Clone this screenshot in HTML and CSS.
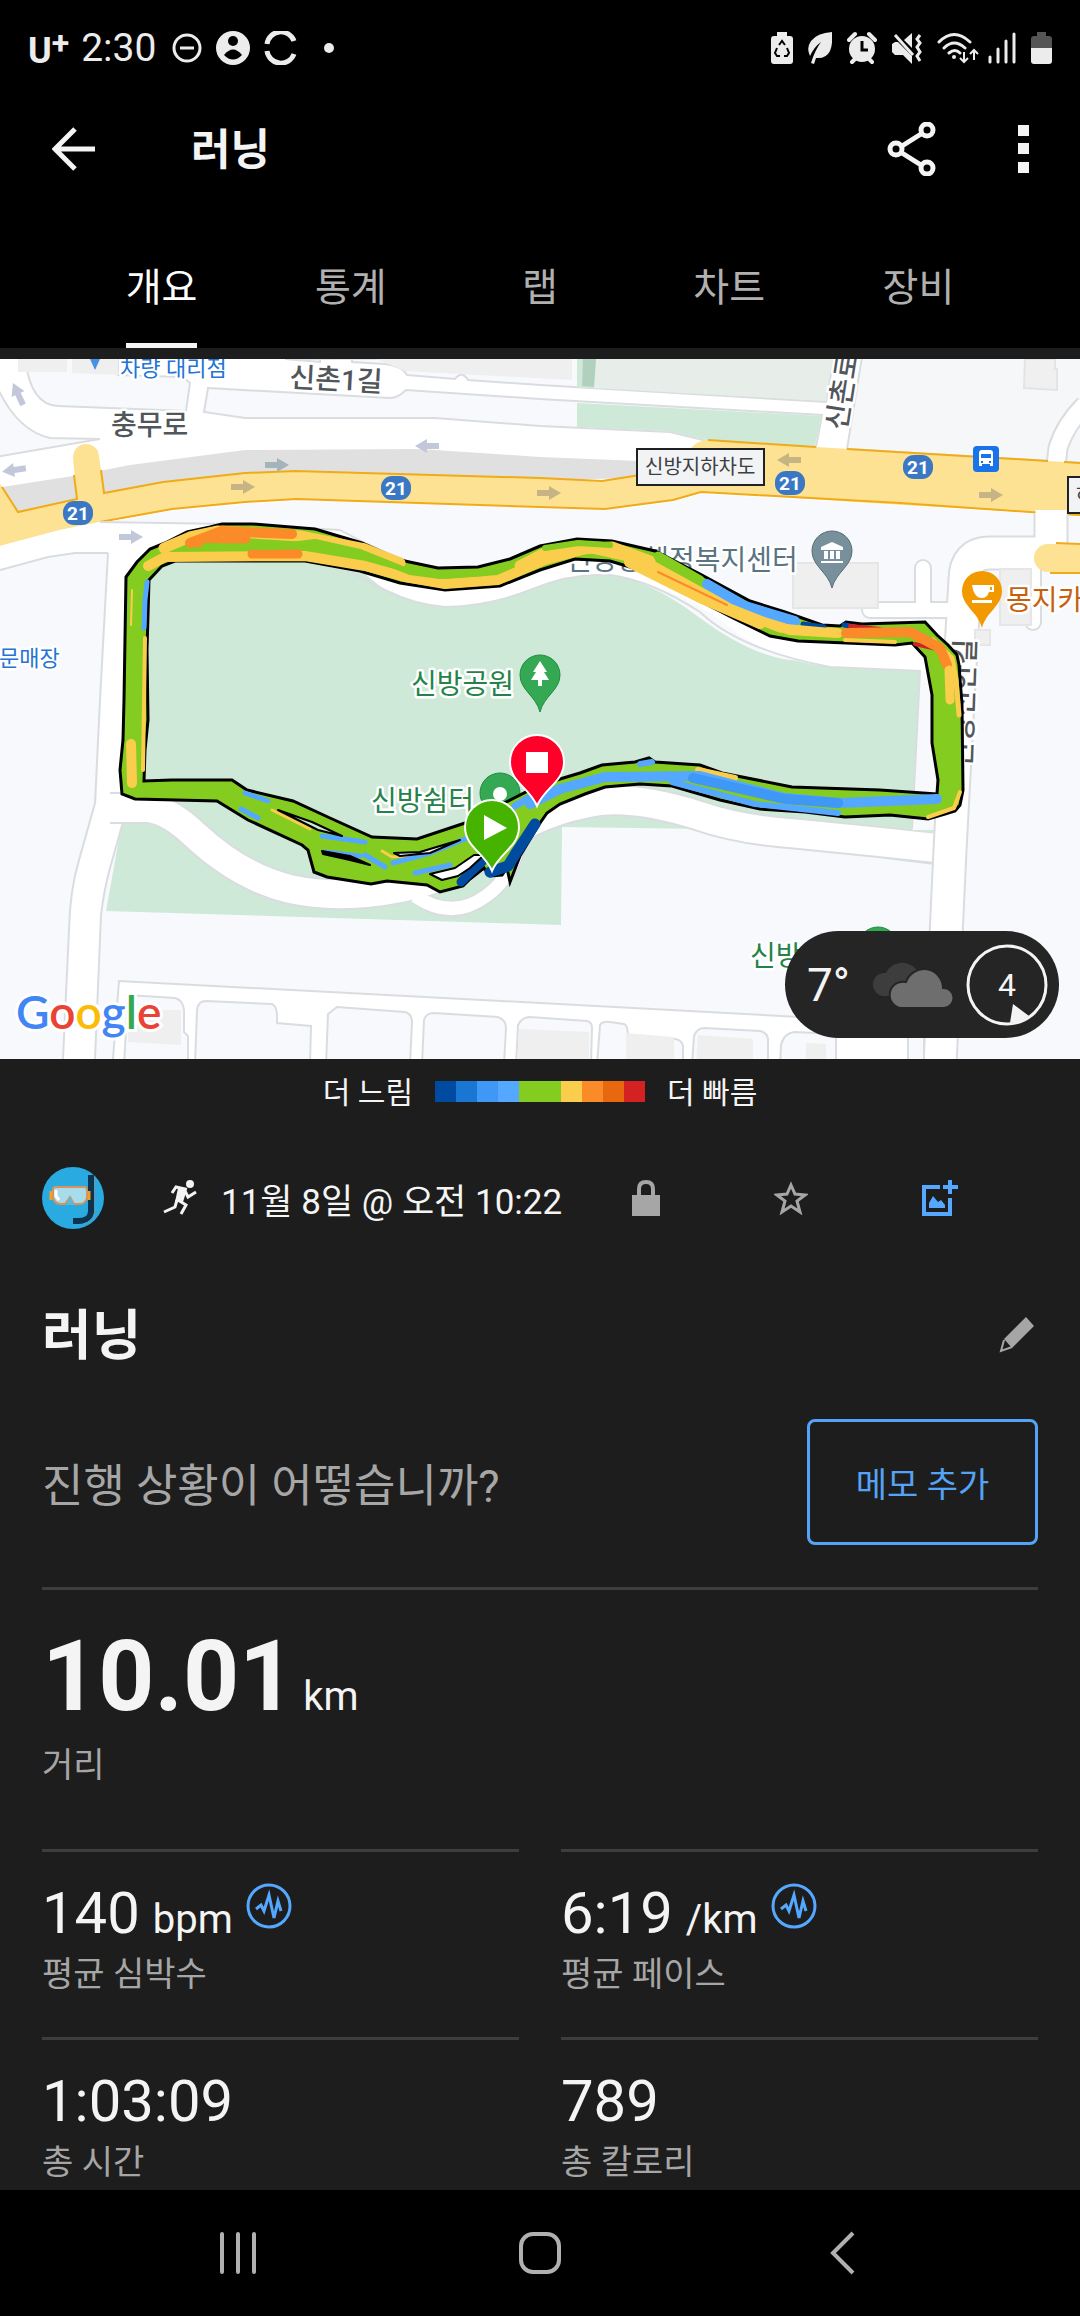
FILE: index.html
```html
<!DOCTYPE html>
<html lang="ko">
<head>
    <meta charset="UTF-8">
    <meta name="viewport" content="width=device-width, initial-scale=1.0">
    <title>러닝</title>
    <link rel="stylesheet" href="styles.css">
</head>
<body>

    <!-- Status bar -->
    <div class="status-bar">
        <div class="status-left">
            <span class="carrier">U<span class="carrier-plus">+</span></span>
            <span class="clock">2:30</span>
            <div class="notifications">
                <svg width="30" height="34" viewBox="0 0 30 34"><circle cx="15" cy="17" r="13" fill="none" stroke="#ececec" stroke-width="3"/><path d="M8 17h14" stroke="#ececec" stroke-width="3"/></svg>
                <svg width="34" height="34" viewBox="0 0 34 34"><circle cx="17" cy="17" r="17" fill="#ececec"/><circle cx="17" cy="10" r="5" fill="#000"/><path d="M8 24q9-11 18 0q-9 9-18 0z" fill="#000"/></svg>
                <svg width="34" height="34" viewBox="0 0 34 34"><path d="M3 13a14 14 0 0 1 27-3M3 20a14 14 0 0 0 27 3" fill="none" stroke="#ececec" stroke-width="5"/></svg>
                <span class="dot"></span>
            </div>
        </div>
        <div class="status-right">
            <svg width="22" height="34" viewBox="0 0 22 34"><path d="M6 1h10v4h3q3 0 3 3v22q0 3-3 3H3q-3 0-3-3V8q0-3 3-3h3z" fill="#ececec"/><path d="M8 14l3-4l3 4M16 17l2 5l-2 3h-3M6 17l-2 5l2 3h3" fill="none" stroke="#000" stroke-width="2"/></svg>
            <svg width="24" height="34" viewBox="0 0 24 34"><path d="M24 1Q9 2 3 10Q-2 17 2 25Q6 16 13 11Q7 19 3 32l3 1L8 27q10 1 14-7Q25 13 24 1z" fill="#ececec"/></svg>
            <svg width="30" height="34" viewBox="0 0 30 34"><circle cx="15" cy="18" r="13" fill="#ececec"/><path d="M2 9l6-6M28 9l-6-6M5 31l3-3M25 31l-3-3" stroke="#ececec" stroke-width="4" stroke-linecap="round"/><path d="M15 10v9h6" fill="none" stroke="#000" stroke-width="3"/></svg>
            <svg width="30" height="34" viewBox="0 0 30 34"><path d="M0 13l3-2h3l14 14v8l-9-9H3l-3-3zM12 9l8-7v15z" fill="#ececec"/><path d="M3 4l18 20" stroke="#ececec" stroke-width="3"/><path d="M28 4l-3 4l3 4l-3 4l3 5l-3 4l3 5" fill="none" stroke="#ececec" stroke-width="3"/></svg>
            <svg class="wifi" width="42" height="34" viewBox="0 0 42 34"><path d="M2 11q15-15 31 0M7 17q10-10 21 0M12 22q6-5 11 0" fill="none" stroke="#ececec" stroke-width="3" stroke-linecap="round"/><circle cx="17" cy="26" r="2" fill="#ececec"/><path d="M27 21v10m-4-4l4 4l4-4M37 29V19m-4 4l4-4l4 4" fill="none" stroke="#ececec" stroke-width="2"/></svg>
            <svg width="28" height="34" viewBox="0 0 28 34"><path d="M2 26v5M10 18v13M18 10v21M26 3v28" stroke="#ececec" stroke-width="3" stroke-linecap="round"/></svg>
            <svg width="21" height="34" viewBox="0 0 21 34"><path d="M6 1h9v4h3q3 0 3 3v10H0V8q0-3 3-3h3z" fill="#555"/><path d="M0 17h21v13q0 3-3 3H3q-3 0-3-3z" fill="#ececec"/></svg>
        </div>
    </div>

    <!-- App bar -->
    <header class="app-bar">
        <button class="icon-btn" aria-label="뒤로">
            <svg width="44" height="44" viewBox="0 0 44 44"><path d="M43 22H4M23 2L3 22L23 42" fill="none" stroke="#f4f4f4" stroke-width="5"/></svg>
        </button>
        <h1>러닝</h1>
        <button class="icon-btn share" aria-label="공유">
            <svg width="50" height="54" viewBox="0 0 50 54"><g fill="none" stroke="#f4f4f4" stroke-width="5"><path d="M15 24L34 12M15 31L34 43"/><circle cx="9" cy="27" r="6"/><circle cx="40" cy="8" r="6"/><circle cx="40" cy="46" r="6"/></g></svg>
        </button>
        <button class="icon-btn" aria-label="더보기">
            <svg width="12" height="48" viewBox="0 0 12 48"><path d="M0 0h11v11H0zM0 18h11v11H0zM0 37h11v11H0z" fill="#f4f4f4"/></svg>
        </button>
    </header>

    <nav class="tabs">
        <a href="#overview" class="active">개요</a>
        <a href="#stats">통계</a>
        <a href="#laps">랩</a>
        <a href="#charts">차트</a>
        <a href="#gear">장비</a>
    </nav>

    <main>
        <!-- Route map -->
        <div class="map">
            <svg class="map-canvas" viewBox="0 359 1080 700">
                <defs>
                    <path id="arrow" d="M-12 -3H0V-7L12 0L0 7V3H-12Z"/>
                    <path id="pin" d="M0 36C-4 20-20 14-20-1A20 20 0 0 1 20-1C20 14 4 20 0 36Z"/>
                </defs>
                <rect x="0" y="359" width="1080" height="700" fill="#f7f9fc"/>

                <!-- upper side streets -->
                <path d="M0 359H862L847 450L1080 463V520L300 500L60 545L0 570Z" fill="#fff"/>
                <g fill="#f7f9fc" stroke="#dadde0" stroke-width="2">
                    <path d="M-5 382Q15 430 50 438L100 439L-5 457Z"/>
                    <path d="M25 357Q30 405 58 406L186 411L190 383L183 377L118 375V357Z"/>
                    <path d="M208 388L390 398Q398 398 406 390L540 399L822 415L816 447L707 441L670 432L540 426L435 418H245L204 412Z"/>
                    <path d="M285 359L320 362V357H352V362L385 364Q402 366 407 375L455 379Q462 370 468 380L540 385L826 402L834 357Z"/>
                    <path d="M862 357L847 449L1085 463V357Z" fill="#f5f7f9"/>
                </g>
                <path d="M18 359H67V372H18ZM72 359H118V375L72 373ZM376 359H572V380L405 371Z" fill="#efefef"/>
                <path d="M577 359H832L826 401L577 387ZM577 403L821 416L815 446L707 440L670 431L577 427Z" fill="#cee9d7"/>
                <path d="M596 359H832L826 401L594 388Z" fill="#e7ede9"/>
                <path d="M583 359H596L594 387L582 386Z" fill="#b2d0be"/>
                <path d="M1025 359H1055V369H1057V390L1024 388Z" fill="#f0f0f0" stroke="#e4e4e4" stroke-width="2"/>
                <path d="M1085 405Q1065 425 1058 448L1056 466" fill="none" stroke="#dadde0" stroke-width="21"/>
                <path d="M1085 405Q1065 425 1058 448L1056 466" fill="none" stroke="#fff" stroke-width="17"/>

                <!-- tunnel -->
                <path d="M2 487L73 476L130 465L245 450L420 449L540 457L640 461V478L540 480L245 476L20 514Z" fill="#e0e0e0"/>

                <!-- highway 21 -->
                <path d="M0 484L18 512L77 499L73 458A13 13 0 0 1 99 456L104 493L163 482L245 473L295 471L540 478L602 481L640 475L690 450Q695 441 708 440L816 447L1080 463V516L1043 513L900 505L701 492L673 500L605 509L540 507L297 499L245 502L172 509L100 522L60 530L0 546Z" fill="#fde293"/>
                <path d="M2 487L18 512L77 499L74 475M101 470L104 493L163 482L245 473L295 471L540 478L602 481L640 475M708 440L816 447M847 449L1048 461M1064 462L1080 463M100 522L172 509L245 502L297 499L540 507L605 509L673 500L701 492L900 503L1043 513M1060 514L1080 515" fill="none" stroke="#f0ab19" stroke-width="2"/>
                <path d="M0 547L60 531L100 523L172 511L245 504L297 501L540 509L605 511L673 502L701 494L900 505L1080 517V700H0Z" fill="#f7f9fc"/>

                <!-- park -->
                <path d="M125 560H350L385 590Q415 605 445 607Q490 606 530 590Q570 573 610 575Q650 580 700 618Q750 655 790 660L920 671L912 830H937V780L937 832L562 827L561 925L106 911L122 822L130 700Z" fill="#cee9d7"/>

                <!-- trails and roads around the park -->
                <path d="M0 546L60 530L100 522L230 524L340 530Q400 560 440 572Q500 572 560 545Q600 535 655 555L800 625L960 620V680L920 671L830 667Q780 662 740 635Q680 585 610 575Q570 573 530 590Q490 606 445 607Q415 605 385 590L350 562H160L140 600L108 553H75L48 557L0 570Z" fill="#fff"/>
                <path d="M100 522L230 524L340 530Q385 555 440 572M350 572L385 590Q415 605 445 607Q490 606 530 590Q570 573 610 575Q650 580 700 612Q740 650 830 667L920 671L912 829M0 570L48 557L75 553H108" fill="none" stroke="#dadde0" stroke-width="2"/>
                <path d="M108 553L100 700L97 800L80 860Q70 890 69 930L63 1059H95L101 915Q104 890 110 868L123 822L150 800L124 790L130 560Z" fill="#fff"/>
                <path d="M108 553L100 700L95 803L79 860Q70 890 69 930L63 1059M95 1059L101 915Q104 890 110 868L123 822" fill="none" stroke="#dadde0" stroke-width="2"/>
                <g fill="none" stroke-linejoin="round">
                    <path d="M420 898Q452 921 486 896Q512 878 520 840" stroke="#dadde0" stroke-width="17"/>
                    <path d="M110 808L148 808Q170 811 195 835Q240 877 290 889Q340 900 400 888Q450 878 490 850Q530 812 600 801Q640 797 700 816Q740 830 800 834L880 842L945 850" stroke="#dadde0" stroke-width="32"/>
                    <path d="M100 808L148 808Q170 811 195 835Q240 877 290 889Q340 900 400 888Q450 878 490 850Q530 812 600 801Q640 797 700 816Q740 830 800 834L880 842L955 850" stroke="#fff" stroke-width="28"/>
                    <path d="M415 896Q452 921 486 896Q512 878 520 840" stroke="#fff" stroke-width="13"/>
                    <path d="M1051 513V553H990Q965 553 965 580L958 700L950 850L940 1065" stroke="#dadde0" stroke-width="35"/>
                    <path d="M960 610H870M923 605V568M1033 560V622" stroke="#dadde0" stroke-width="18" stroke-linecap="round"/>
                    <path d="M960 610H870M923 605V568M1033 560V622" stroke="#fff" stroke-width="14" stroke-linecap="round"/>
                    <path d="M1051 510V553H990Q965 553 965 580L958 700L950 850L940 1065" stroke="#fff" stroke-width="31"/>
                </g>
                <path d="M1085 544H1048A14 14 0 0 0 1048 572H1085Z" fill="#fde293"/>
                <path d="M1056 543L1080 544M1050 573H1080" stroke="#f0ab19" stroke-width="2"/>
                <path d="M793 563H878V608H793ZM1000 569H1031V625H1000ZM975 630H990V645H975Z" fill="#efefef" stroke="#e6e6e6" stroke-width="2"/>

                <!-- housing blocks -->
                <path d="M119 981L540 1003L800 1017L925 1024V1059H113Z" fill="#fff"/>
                <path d="M113 1059L119 981L540 1003L800 1017" fill="none" stroke="#dadde0" stroke-width="2"/>
                <g fill="#f7f9fc" stroke="#dadde0" stroke-width="2">
                    <path d="M124 1065L128 995L175 998Q183 1000 184 1010V1032L188 1036V1065Z"/>
                    <path d="M195 1065L197 1010Q198 1001 206 1001L272 1004Q278 1006 277 1023L311 1026L310 1065Z"/>
                    <path d="M326 1065L328 1014L337 1007L405 1012Q412 1014 412 1022L410 1065Z"/>
                    <path d="M422 1065L424 1020Q426 1013 434 1013L498 1017Q506 1020 506 1028L504 1065Z"/>
                    <path d="M516 1065L518 1025Q522 1017 530 1017L587 1021Q592 1022 592 1028L591 1065Z"/>
                    <path d="M597 1065L600 1025Q602 1021 610 1022L624 1024Q628 1025 628 1037L676 1039Q683 1041 683 1047V1065Z"/>
                    <path d="M692 1065L694 1036Q697 1028 704 1028L760 1031Q768 1033 768 1040V1065Z"/>
                    <path d="M780 1065L781 1045Q784 1033 795 1032L836 1034V1065ZM908 1065V1030H924V1065Z"/>
                </g>
                <path d="M128 1010H181V1045L128 1042ZM519 1029L589 1032V1065H517ZM626 1033L674 1037V1065H626ZM698 1035L753 1039V1065H696ZM806 1043L826 1044V1065H806Z" fill="#efefef"/>

                <!-- one-way arrows -->
                <g fill="#c3c7da">
                    <use href="#arrow" transform="translate(18 394) rotate(-115)"/>
                    <use href="#arrow" transform="translate(14 470) rotate(172)"/>
                    <use href="#arrow" transform="translate(427 446) rotate(180)"/>
                    <use href="#arrow" transform="translate(131 537)"/>
                </g>
                <use href="#arrow" transform="translate(277 465)" fill="#a5b3bb"/>
                <g fill="#c6b485">
                    <use href="#arrow" transform="translate(243 487)"/>
                    <use href="#arrow" transform="translate(549 493)"/>
                    <use href="#arrow" transform="translate(789 460) rotate(180)"/>
                    <use href="#arrow" transform="translate(991 495)"/>
                </g>

                <!-- place names -->
                <g class="map-label road">
                    <text x="111" y="435">충무로</text>
                    <text x="289" y="387" transform="rotate(3 289 387)">신촌1길</text>
                    <text x="846" y="431" transform="rotate(-81 846 431)">신촌로</text>
                    <text x="971" y="768" transform="rotate(-88 971 768)">신방신안길</text>
                </g>
                <g class="map-label shop">
                    <text x="120" y="376">차량 대리점</text>
                    <text x="-1" y="666">문매장</text>
                </g>
                <path d="M90 359h10l-5 11z" fill="#4a90e2"/>
                <g class="map-label park">
                    <text x="411" y="694">신방공원</text>
                    <text x="371" y="811">신방쉼터</text>
                    <text x="750" y="966">신방</text>
                </g>
                <text class="map-label office" x="566" y="570">신방동행정복지센터</text>
                <text class="map-label cafe" x="1006" y="610">몽지카페</text>

                <g class="sign">
                    <rect x="637" y="449" width="127" height="36"/>
                    <text x="645" y="474">신방지하차도</text>
                    <rect x="1068" y="477" width="127" height="36"/>
                    <text x="1076" y="502">하</text>
                </g>
                <g class="shield">
                    <rect x="63" y="501" width="30" height="24" rx="11"/><text x="78" y="520">21</text>
                    <rect x="381" y="476" width="30" height="24" rx="11"/><text x="396" y="495">21</text>
                    <rect x="775" y="471" width="30" height="24" rx="11"/><text x="790" y="490">21</text>
                    <rect x="903" y="455" width="30" height="24" rx="11"/><text x="918" y="474">21</text>
                </g>
                <rect x="973" y="446" width="26" height="26" rx="4" fill="#1a73e8"/>
                <path d="M979 453q0-3 3-3h8q3 0 3 3v13h-3v-2h-8v2h-3z" fill="#fff"/>
                <path d="M981 454h10v4h-10zM981 461h2v2h-2zM989 461h2v2h-2z" fill="#1a73e8"/>

                <!-- place pins -->
                <use href="#pin" x="540" y="676" fill="#34a853" stroke="#1e8e3e"/>
                <path d="M540 661l7 11h-3l5 8h-7v6h-4v-6h-7l5-8h-3z" fill="#fff"/>
                <circle cx="500" cy="793" r="20" fill="#34a853" stroke="#1e8e3e"/><circle cx="500" cy="794" r="7" fill="#fff"/>
                <circle cx="878" cy="947" r="20" fill="#34a853" stroke="#1e8e3e"/>
                <use href="#pin" x="832" y="552" fill="#78909c" stroke="#546e7a"/>
                <path d="M821 547l11-5l11 5v3h-22zM824 551h4v8h-4zM830 551h4v8h-4zM836 551h4v8h-4zM821 561h22v2h-22z" fill="#fff"/>
                <use href="#pin" x="982" y="592" fill="#f29900"/>
                <path d="M972 585h22v7h-5q-2 6-7 6q-8 0-10-13zM972 600h20v3h-20z" fill="#fff"/><path d="M990 587h2v3h-2z" fill="#f29900"/>

                <!-- recorded route -->
                <path fill="#84cc1f" fill-rule="evenodd" stroke="#000" stroke-width="3" d="M126 577L137 562L150 549L165 543L187 532L210 527L222 524H253L315 529L362 543L400 560L438 568L478 567L510 559L540 546L577 539L612 541L655 551L700 574L750 601L785 612L822 625L840 626L846 622L862 624L925 622L937 635L948 645L957 655L959 665L962 705L963 790L960 805L955 811L945 814L928 819L890 815L845 817L805 812L760 809L720 800L672 786L640 784L605 787L585 794L560 804L547 813L538 826L520 856L510 882L507 868L502 875L490 876L484 868L470 879L463 886L440 892L427 885L387 881L371 884L327 877L314 872L308 850L302 845L248 820L217 801L135 799L122 794L120 770L123 740L124 700Z
                    M149 580L162 566L175 561H305L360 571L400 583L445 590L500 586L540 570L575 559L610 561L640 570L733 618L770 636L798 641L895 645L912 643L925 657L932 695V743L938 780L937 794L880 790L792 787L722 773L700 765L655 762L649 758L635 762L602 765L580 773L560 779L530 790L465 823L417 839L372 837L330 818L293 801L247 790L232 780H172L144 781L145 750L148 720L147 650Z"/>
                <g fill="none" stroke-linecap="round" stroke-linejoin="round">
                    <path d="M164 548L190 537L218 531L300 536L365 549L400 563" stroke="#fbcd4c" stroke-width="11"/>
                    <path d="M190 543L222 531L292 534" stroke="#fb8a28" stroke-width="10"/>
                    <path d="M195 543L246 539" stroke="#fb8a28" stroke-width="9"/>
                    <path d="M148 566L165 557L305 556L365 566L405 577L445 584L498 580L545 560L590 548L640 559L700 592L740 613L790 630L838 633" stroke="#fbcd4c" stroke-width="10"/>
                    <path d="M252 554L298 554" stroke="#fb8a28" stroke-width="9"/>
                    <path d="M205 546L275 547L315 542L360 552L410 572L440 576L485 573" stroke="#84cc1f" stroke-width="6"/>
                    <path d="M520 566L545 553L580 549L612 547L650 561" stroke="#fbcd4c" stroke-width="11"/>
                    <path d="M545 548L578 543L610 545" stroke="#84cc1f" stroke-width="6"/>
                    <path d="M630 562L700 597L760 623" stroke="#fbcd4c" stroke-width="12"/>
                    <path d="M658 572L727 605" stroke="#fb8a28" stroke-width="2"/>
                    <path d="M658 556L700 580" stroke="#84cc1f" stroke-width="9"/>
                    <path d="M707 584L745 606L795 621" stroke="#55a8ff" stroke-width="10"/>
                    <path d="M803 624L824 627M844 625L850 626" stroke="#004ba0" stroke-width="5"/>
                    <path d="M850 626L880 629" stroke="#d42222" stroke-width="4"/>
                    <path d="M845 640L895 642" stroke="#fbcd4c" stroke-width="4"/>
                    <path d="M732 609L780 628L836 633" stroke="#fbcd4c" stroke-width="9"/>
                    <path d="M915 644L945 651" stroke="#d42222" stroke-width="4"/>
                    <path d="M933 640L952 658L956 680L959 715" stroke="#fbcd4c" stroke-width="5"/>
                    <path d="M846 633L910 632L940 648L947 665" stroke="#fb8a28" stroke-width="10"/>
                    <path d="M949 670L950 700" stroke="#fbcd4c" stroke-width="9"/>
                    <path d="M960 792L954 808L928 817" stroke="#fbcd4c" stroke-width="4"/>
                    <path d="M698 770L735 778" stroke="#fbcd4c" stroke-width="6"/>
                    <path d="M530 804L560 789L605 777L700 776L785 798L840 803L937 799" stroke="#55a8ff" stroke-width="10"/>
                    <path d="M693 778L785 799L838 803" stroke="#3f97f6" stroke-width="10"/>
                    <path d="M640 764L652 762M672 782L755 804L838 813" stroke="#55a8ff" stroke-width="6"/>
                    <path d="M147 582L145 600L144 628" stroke="#55a8ff" stroke-width="5"/>
                    <path d="M145 638L143 770" stroke="#fbcd4c" stroke-width="4"/>
                    <path d="M132 590L131 625" stroke="#fbcd4c" stroke-width="2"/>
                    <path d="M131 744L132 783" stroke="#fbcd4c" stroke-width="10"/>
                    <path d="M245 793L268 801M241 809L258 818M322 836L365 842M325 852L360 856M365 855L385 867" stroke="#55a8ff" stroke-width="5"/>
                    <path d="M272 810L310 829M382 851L392 857L420 855" stroke="#fbcd4c" stroke-width="3"/>
                    <path d="M393 863L430 853L475 835M415 873L450 865" stroke="#55a8ff" stroke-width="5"/>
                    <path d="M535 824L516 853L508 866L490 872" stroke="#004ba0" stroke-width="11"/>
                    <path d="M482 862L470 873L461 882" stroke="#004ba0" stroke-width="9"/>
                    <path d="M515 806L530 797" stroke="#55a8ff" stroke-width="7"/>
                </g>
                <g stroke="#000" stroke-width="2" stroke-linejoin="round">
                    <path d="M278 810L312 822L342 836L318 830Z" fill="#cee9d7"/>
                    <path d="M322 851L350 856L370 865L350 860L323 854Z"/>
                    <path d="M394 853L420 852L460 840L430 853L400 856Z" fill="#fff"/>
                    <path d="M430 874L455 868L474 855L484 855L470 868L458 876L442 880Z" fill="#fff"/>
                </g>

                <!-- finish and start -->
                <path d="M537 806C530 788 510 782 510 762A27 27 0 0 1 564 762C564 782 544 788 537 806Z" fill="#ff0029" stroke="#fff" stroke-width="2"/>
                <rect x="526" y="752" width="22" height="21" fill="#fff"/>
                <path d="M492 871C485 853 465 847 465 827A27 27 0 0 1 519 827C519 847 499 853 492 871Z" fill="#45b300" stroke="#fff" stroke-width="2"/>
                <path d="M484 815L507 828L484 840Z" fill="#fff"/>

                <text class="google" x="16" y="1029"><tspan fill="#4285f4">G</tspan><tspan fill="#ea4335">o</tspan><tspan fill="#fbbc05">o</tspan><tspan fill="#4285f4">g</tspan><tspan fill="#34a853">l</tspan><tspan fill="#ea4335">e</tspan></text>
            </svg>

            <div class="weather">
                <span class="temp">7°</span>
                <svg width="82" height="46" viewBox="0 0 82 46"><path d="M11 34A11 11 0 0 1 14 11A18 18 0 0 1 47 12L30 34Z" fill="#3d3d3d"/><path d="M28 46A13 13 0 0 1 34 20A19 19 0 0 1 71 26A10 10 0 0 1 72 46Z" fill="#6e6e6e" stroke="#252525" stroke-width="2"/></svg>
                <div class="wind">
                    <svg width="82" height="82" viewBox="0 0 82 82"><circle cx="41" cy="41" r="39" fill="none" stroke="#f4f4f4" stroke-width="3"/><path d="M47 60L63 72Q55 78 44 79Z" fill="#f4f4f4"/></svg>
                    <span>4</span>
                </div>
            </div>
        </div>

        <div class="legend">
            <span>더 느림</span>
            <div class="scale">
                <i class="s1"></i><i class="s2"></i><i class="s3"></i><i class="s4"></i><i class="s5"></i><i class="s5"></i><i class="s6"></i><i class="s7"></i><i class="s8"></i><i class="s9"></i>
            </div>
            <span>더 빠름</span>
        </div>

        <!-- Activity info -->
        <div class="meta">
            <svg class="avatar" width="62" height="62" viewBox="0 0 62 62"><circle cx="31" cy="31" r="31" fill="#29abe2"/><path d="M49 8V45Q48 54 36 54H31" fill="none" stroke="#0c3350" stroke-width="6"/><path d="M53 10V45Q51 54 41 57" fill="none" stroke="#6f93a8"/><path d="M9 24v9M47 24v9" stroke="#f5a01d" stroke-width="3"/><path d="M13 20H42Q45 20 45 24V31Q43 37 38 37H32L28 30L23 37H18Q12 36 11 30V24Q11 20 13 20Z" fill="#a9dcea" stroke="#d9935a" stroke-width="2"/><path d="M14 23v6l3 4" stroke="#fff" stroke-width="3" fill="none"/><path d="M28 29l4 9h-8z" fill="#56bbdc"/></svg>
            <svg class="runner" width="34" height="36" viewBox="0 0 34 36"><circle cx="27" cy="4" r="4" fill="#f4f4f4"/><path d="M9 13L13 7L22 9L15 20L23 25L18 34" fill="none" stroke="#f4f4f4" stroke-width="3"/><path d="M15 8L24 9L20 22L12 22Z" fill="#f4f4f4"/><path d="M22 11L25 17L33 12" fill="none" stroke="#f4f4f4" stroke-width="3"/><path d="M14 20L12 27L1 32" fill="none" stroke="#f4f4f4" stroke-width="3"/></svg>
            <time>11월 8일 @ 오전 10:22</time>
            <div class="meta-actions">
                <button aria-label="공개 범위"><svg width="28" height="36" viewBox="0 0 28 36"><path d="M0 15H28V36H0Z" fill="#a6a6a6"/><path d="M7 17V9Q7 2 14 2Q21 2 21 9V17" fill="none" stroke="#a6a6a6" stroke-width="4"/></svg></button>
                <button aria-label="즐겨찾기"><svg width="34" height="34" viewBox="0 0 34 34"><path d="M17 4L21 13L31 14L23 20L26 31L17 25L8 31L11 20L3 14L13 13Z" fill="none" stroke="#a6a6a6" stroke-width="3"/></svg></button>
                <button aria-label="사진 추가"><svg width="36" height="36" viewBox="0 0 36 36"><path d="M18 7H2V34H28V18" fill="none" stroke="#55a8ff" stroke-width="4"/><path d="M28 0V14M21 7H36" stroke="#55a8ff" stroke-width="4"/><path d="M7 28V23L11 16L16 22L19 20L23 25V28Z" fill="#55a8ff"/></svg></button>
            </div>
        </div>

        <div class="title-row">
            <h2>러닝</h2>
            <button aria-label="이름 편집"><svg width="36" height="36" viewBox="0 0 36 36"><path d="M27 0L35 9L13 31L5 22Z" fill="#a6a6a6"/><path d="M5 23L2 34L13 30" fill="none" stroke="#a6a6a6" stroke-width="2"/></svg></button>
        </div>

        <div class="note-row">
            <p>진행 상황이 어떻습니까?</p>
            <button class="note-btn">메모 추가</button>
        </div>

        <section class="stats">
            <div class="stat distance">
                <p class="value">10.01 <small>km</small></p>
                <p class="label">거리</p>
            </div>
            <div class="stat">
                <p class="value">140 <small>bpm</small>
                    <svg class="pulse" width="46" height="46" viewBox="0 0 46 46"><circle cx="23" cy="23" r="21" fill="none" stroke="#55a8ff" stroke-width="3"/><path d="M10 26L15 22L18 28L23 12L28 35L32 18L35 28" fill="none" stroke="#55a8ff" stroke-width="3"/></svg>
                </p>
                <p class="label">평균 심박수</p>
            </div>
            <div class="stat">
                <p class="value">6:19 <small>/km</small>
                    <svg class="pulse" width="46" height="46" viewBox="0 0 46 46"><circle cx="23" cy="23" r="21" fill="none" stroke="#55a8ff" stroke-width="3"/><path d="M10 26L15 22L18 28L23 12L28 35L32 18L35 28" fill="none" stroke="#55a8ff" stroke-width="3"/></svg>
                </p>
                <p class="label">평균 페이스</p>
            </div>
            <div class="stat last">
                <p class="value">1:03:09</p>
                <p class="label">총 시간</p>
            </div>
            <div class="stat last">
                <p class="value">789</p>
                <p class="label">총 칼로리</p>
            </div>
        </section>
    </main>

    <!-- System navigation -->
    <footer class="nav-bar">
        <button aria-label="최근 앱"><svg width="40" height="42" viewBox="0 0 40 42"><path d="M4 2V40M20 2V40M36 2V40" stroke="#b0b0b0" stroke-width="4" stroke-linecap="round"/></svg></button>
        <button aria-label="홈"><svg width="42" height="42" viewBox="0 0 42 42"><rect x="2" y="2" width="38" height="38" rx="12" fill="none" stroke="#b0b0b0" stroke-width="4"/></svg></button>
        <button aria-label="뒤로"><svg width="26" height="44" viewBox="0 0 26 44"><path d="M24 2L4 22L24 42" fill="none" stroke="#b0b0b0" stroke-width="4"/></svg></button>
    </footer>

</body>
</html>
```

FILE: styles.css
```css
* {
    box-sizing: border-box;
}

body {
    margin: 0;
    min-height: 100vh;
    display: flex;
    flex-direction: column;
    background-color: #000;
    color: #f4f4f4;
    font-family: Roboto, "Noto Sans CJK KR", sans-serif;
}

h1, h2, p {
    margin: 0;
}

button {
    padding: 0;
    border: none;
    background: none;
    color: inherit;
    font: inherit;
    cursor: pointer;
}

svg {
    display: block;
    flex: none;
}

/* Status bar */
.status-bar {
    display: flex;
    justify-content: space-between;
    align-items: center;
    height: 96px;
    padding: 0 28px;
    color: #ececec;
}

.status-left,
.status-right,
.notifications {
    display: flex;
    align-items: center;
}

.status-left {
    gap: 12px;
}

.notifications {
    gap: 14px;
    padding-left: 4px;
}

.status-right {
    gap: 15px;
}

.wifi {
    margin-right: -6px;
}

.carrier {
    font-size: 36px;
    font-weight: 700;
}

.carrier-plus {
    font-size: 32px;
    vertical-align: 9px;
}

.clock {
    font-size: 39px;
}

.dot {
    width: 10px;
    height: 10px;
    margin-left: 12px;
    border-radius: 50%;
    background-color: #ececec;
}

/* App bar */
.app-bar {
    display: flex;
    align-items: center;
    height: 106px;
    padding: 0 50px 0 52px;
}

.app-bar h1 {
    flex: 1;
    margin-left: 95px;
    padding-bottom: 6px;
    font-size: 43px;
    font-weight: 700;
}

.share {
    margin-right: 81px;
}

.tabs {
    display: grid;
    grid-template-columns: repeat(5, 1fr);
    justify-items: center;
    height: 146px;
    padding: 0 67px;
}

.tabs a {
    display: flex;
    align-items: center;
    padding-top: 22px;
    border-bottom: 5px solid transparent;
    color: #b0b0b0;
    font-size: 39px;
    text-decoration: none;
}

.tabs .active {
    border-color: #f4f4f4;
    color: #fff;
}

main {
    flex: 1;
    padding-top: 11px;
    background-color: #1d1d1d;
}

/* Map */
.map {
    position: relative;
    overflow: hidden;
}

.map-canvas {
    width: 100%;
}

.map-label {
    font-size: 28px;
    paint-order: stroke;
    stroke: #fff;
    stroke-width: 5px;
    stroke-linejoin: round;
}

.road {
    fill: #51565b;
    font-weight: 500;
}

.shop {
    fill: #2473d6;
    font-size: 22px;
}

.park {
    fill: #25834a;
}

.office {
    fill: #5a7484;
}

.cafe {
    fill: #c5610c;
}

.sign rect {
    fill: #f2f3f5;
    stroke: #202124;
    stroke-width: 2px;
}

.sign text {
    fill: #3c4043;
    font-size: 20px;
}

.shield rect {
    fill: #3b78c4;
}

.shield text {
    fill: #fff;
    font-size: 19px;
    font-weight: 700;
    text-anchor: middle;
}

.google {
    font-family: Lato, sans-serif;
    font-size: 46px;
    font-weight: 600;
    paint-order: stroke;
    stroke: #fff;
    stroke-width: 6px;
}

.weather {
    position: absolute;
    right: 21px;
    bottom: 21px;
    display: flex;
    align-items: center;
    gap: 12px;
    height: 107px;
    padding: 0 11px 0 22px;
    border-radius: 54px;
    background-color: #252525;
}

.temp {
    margin-right: 10px;
    font-size: 46px;
}

.wind {
    display: grid;
    place-items: center;
    font-size: 32px;
}

.wind > * {
    grid-area: 1 / 1;
}

/* Pace legend */
.legend {
    display: flex;
    justify-content: center;
    align-items: center;
    gap: 22px;
    height: 65px;
    font-size: 30px;
}

.legend span {
    padding-bottom: 4px;
}

.scale {
    display: flex;
}

.scale i {
    width: 21px;
    height: 21px;
}

.s1 { background-color: #004ba0; }
.s2 { background-color: #1976d2; }
.s3 { background-color: #3f97f6; }
.s4 { background-color: #55a8ff; }
.s5 { background-color: #84cc1f; }
.s6 { background-color: #fbcd4c; }
.s7 { background-color: #fb8a28; }
.s8 { background-color: #e8680f; }
.s9 { background-color: #d42222; }

/* Activity info */
.meta,
.title-row,
.note-row {
    display: flex;
    align-items: center;
    padding: 0 42px;
}

.meta {
    height: 148px;
}

.runner {
    margin: 0 24px 0 59px;
}

.meta time {
    font-size: 35px;
}

.meta-actions {
    flex: 1;
    display: flex;
    justify-content: space-between;
    padding: 0 80px 0 70px;
}

.title-row {
    justify-content: space-between;
    height: 126px;
    padding-right: 45px;
}

.title-row h2 {
    padding-bottom: 8px;
    font-size: 54px;
    font-weight: 700;
}

.note-row {
    justify-content: space-between;
    margin-top: 21px;
}

.note-row p {
    color: #a6a6a6;
    font-size: 45px;
}

.note-btn {
    width: 231px;
    height: 126px;
    border: 3px solid #55a3f5;
    border-radius: 8px;
    color: #55a3f5;
    font-size: 34px;
}

/* Stats */
.stats {
    display: grid;
    grid-template-columns: 1fr 1fr;
    column-gap: 42px;
    margin-top: 42px;
    padding: 0 42px;
}

.stat {
    height: 188px;
    padding-top: 25px;
    border-top: 3px solid #3e3e3e;
}

.stat .value {
    display: flex;
    align-items: baseline;
    gap: 13px;
    height: 75px;
    font-size: 58px;
    line-height: 72px;
}

.stat small {
    font-size: 40px;
}

.stat .label {
    color: #a6a6a6;
    font-size: 34px;
    line-height: 44px;
}

.pulse {
    align-self: flex-start;
    margin-top: 6px;
}

.stats .distance {
    grid-column: 1 / -1;
    height: 262px;
    padding-top: 25px;
}

.distance .value {
    gap: 20px;
    height: 128px;
    font-size: 98px;
    font-weight: 700;
    line-height: 124px;
}

.distance small {
    margin-left: -12px;
    font-weight: 400;
}

.stats .last {
    height: 153px;
}

/* System navigation */
.nav-bar {
    display: grid;
    grid-template-columns: repeat(3, 1fr);
    place-items: center;
    height: 126px;
    padding: 0 87px;
}
```
